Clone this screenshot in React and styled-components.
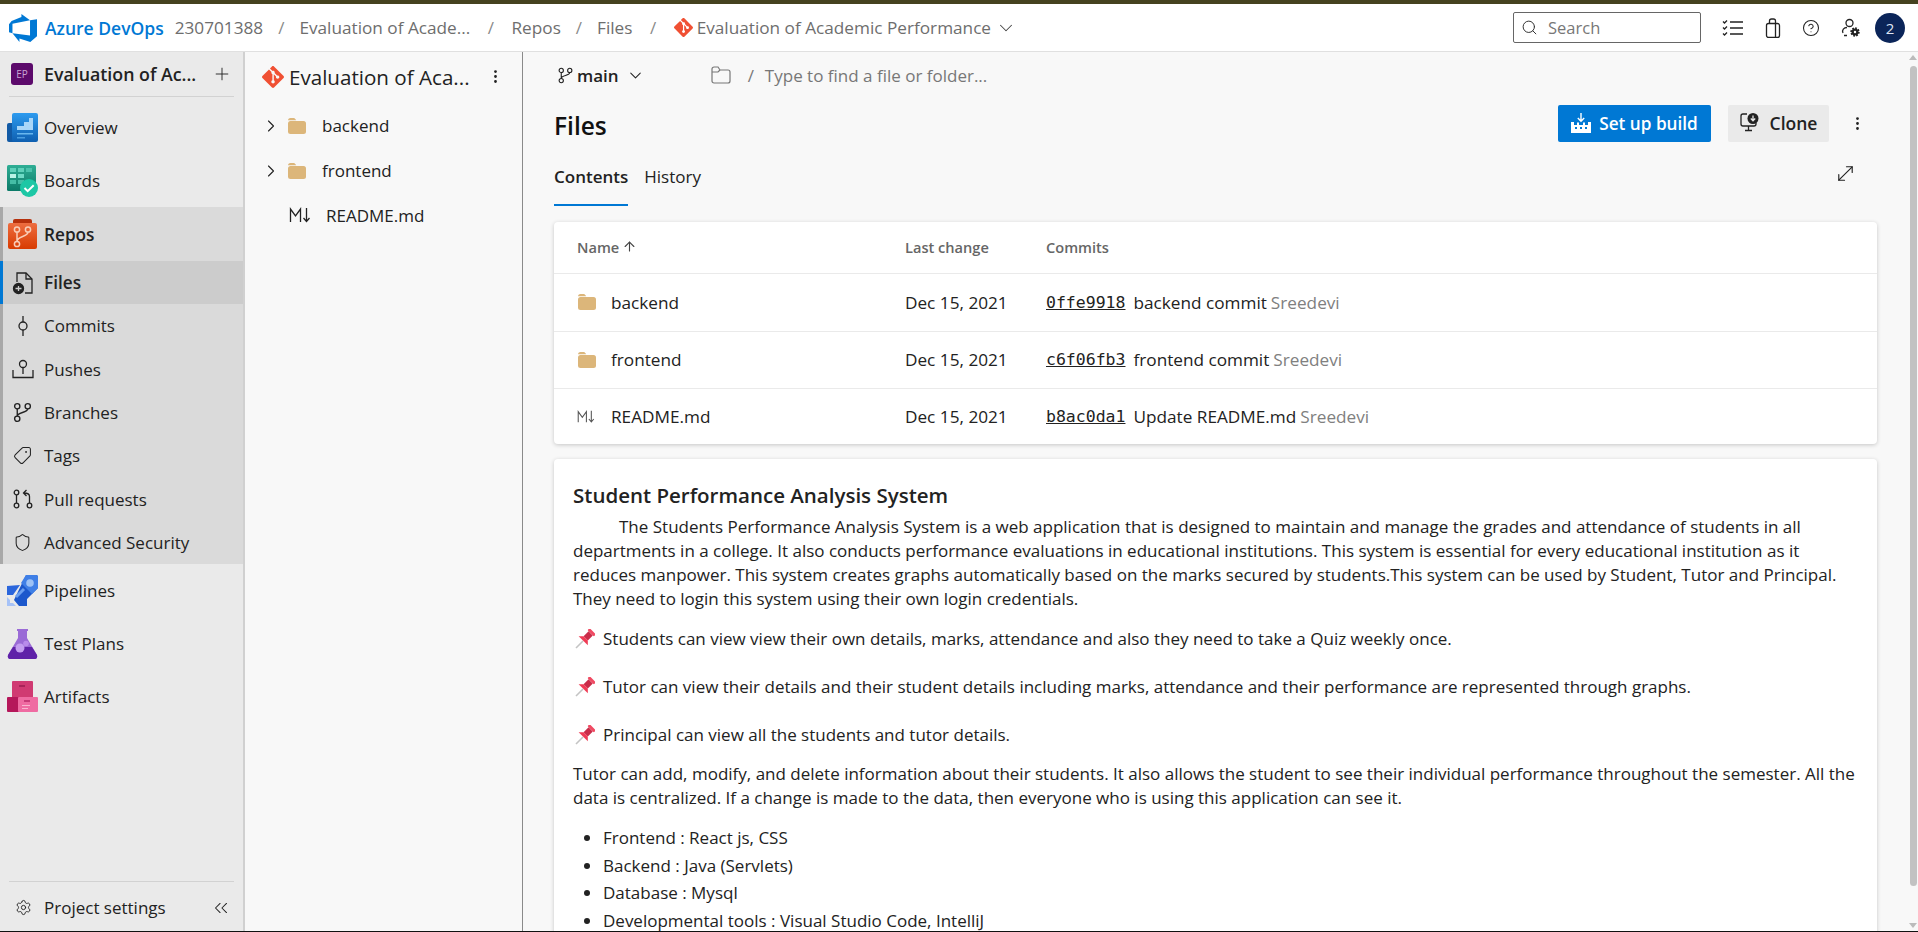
import React from "react";
import styled, { createGlobalStyle } from "styled-components";
import {
  ChevronRight,
  ChevronDown,
  ChevronsLeft,
  Plus,
  EllipsisVertical,
  Search,
  CircleHelp,
  Settings,
  MoveDiagonal,
  ArrowUp,
  Tag,
  Shield,
} from "lucide-react";

const GlobalStyle = createGlobalStyle`
  * { box-sizing: border-box; }
  html, body { margin: 0; padding: 0; height: 100%; overflow: hidden; }
  body {
    font-family: "Open Sans", "Noto Sans", sans-serif;
    font-size: 17px;
    color: #222;
    background: #fff;
  }
`;

//---------- icons --------

const GitLogo = ({ size = 22 }) => (
  <svg width={size} height={size} viewBox="0 0 24 24" fill="#f05033">
    <path d="M23.546 10.93L13.067.452c-.604-.603-1.582-.603-2.188 0L8.708 2.627l2.76 2.76c.645-.215 1.379-.07 1.889.441.516.515.658 1.258.438 1.9l2.658 2.66c.645-.223 1.387-.078 1.9.435.721.72.721 1.884 0 2.604-.719.719-1.881.719-2.6 0-.539-.541-.674-1.337-.404-1.996L12.86 8.955v6.525c.176.086.342.203.488.348.713.721.713 1.883 0 2.6-.719.721-1.889.721-2.609 0-.719-.719-.719-1.879 0-2.598.182-.18.387-.316.605-.406V8.835c-.217-.091-.424-.222-.6-.401-.545-.545-.676-1.342-.396-2.009L7.636 3.7.45 10.881c-.6.605-.6 1.584 0 2.189l10.48 10.477c.604.604 1.582.604 2.186 0l10.43-10.43c.605-.603.605-1.582 0-2.187" />
  </svg>
);

const AzureLogo = () => (
  <svg width="28" height="28" viewBox="0 0 24 24" fill="#0078d4">
    <path d="M0 8.877L2.247 5.91l8.405-3.416V.022l7.37 5.393L2.966 8.338v8.225L0 15.707zm24-4.45v14.651l-5.753 4.9-9.303-3.057v3.056l-5.978-7.416 15.057 1.798V5.415z" />
  </svg>
);

const FolderFilled = () => (
  <svg width="20" height="18" viewBox="0 0 20 18">
    <path d="M1 3.5A2.5 2.5 0 0 1 3.5 1h3c1 0 1.6.6 2.2 1.5l.5.8H1z" fill="#dcb67a" />
    <rect x="1" y="4" width="18" height="13" rx="2.5" fill="#dcb67a" />
  </svg>
);

const MarkdownIcon = ({ color = "#222", width = 22 }) => (
  <svg width={width} viewBox="0 0 22 17" fill="none" stroke={color} strokeWidth="1.3">
    <path d="M1.5 15V2l5 7 5-7v13" />
    <path d="M17.5 1v13M14.5 11l3 3.5 3-3.5" />
  </svg>
);

const BranchIcon = ({ size = 20 }) => (
  <svg width={size} height={size} viewBox="0 0 20 20" fill="none" stroke="#222" strokeWidth="1.3">
    <circle cx="5" cy="4" r="2.5" />
    <circle cx="15" cy="4" r="2.5" />
    <circle cx="5" cy="16" r="2.5" />
    <path d="M5 6.5v7M15 6.5c0 4-10 3-10 7" />
  </svg>
);

const CommitIcon = () => (
  <svg width="20" height="22" viewBox="0 0 20 22" fill="none" stroke="#222" strokeWidth="1.3">
    <circle cx="10" cy="11" r="4" />
    <path d="M10 1v6M10 15v6" />
  </svg>
);

const PushIcon = () => (
  <svg width="22" height="20" viewBox="0 0 22 20" fill="none" stroke="#222" strokeWidth="1.3">
    <circle cx="11" cy="5" r="3.5" />
    <path d="M11 8.5V15M1 11v7.5h20V11M1 18.5h20" />
  </svg>
);

const PullIcon = () => (
  <svg width="20" height="20" viewBox="0 0 20 20" fill="none" stroke="#222" strokeWidth="1.3">
    <circle cx="3.5" cy="3.5" r="2.3" />
    <circle cx="3.5" cy="16.5" r="2.3" />
    <circle cx="16.5" cy="16.5" r="2.3" />
    <path d="M3.5 6v8M16.5 14V7.5C16.5 5 14 4 11 4M13.5 1 10.5 4l3 3" />
  </svg>
);

const FilesIcon = () => (
  <svg width="22" height="24" viewBox="0 0 22 24" fill="none" stroke="#222" strokeWidth="1.3">
    <path d="M5 11V2h9l6 6v14h-7" />
    <path d="M14 2v6h6" />
    <circle cx="6.5" cy="17.5" r="5" fill="#222" />
    <path d="M3.5 17.5h6M6.5 15v5" stroke="#ccc" />
  </svg>
);

const FlippedTag = styled(Tag)`
  transform: scaleX(-1);
`;

const OverviewIcon = () => (
  <svg width="31" height="29" viewBox="0 0 31 29">
    <defs>
      <linearGradient id="ovg" x1="0" y1="0" x2="0" y2="1">
        <stop offset="0" stopColor="#2d9bef" />
        <stop offset="1" stopColor="#0f5fb0" />
      </linearGradient>
    </defs>
    <rect x="0" y="10" width="10" height="19" rx="2" fill="#125aa5" />
    <rect x="5" y="0" width="26" height="29" rx="2" fill="url(#ovg)" />
    <path d="M10 17v-4h7V9h5V5h4v12z" fill="#a9d6f8" />
    <rect x="10" y="20" width="16" height="1.5" fill="#69b7ee" />
    <rect x="10" y="24" width="8" height="1.5" fill="#4a9de0" />
  </svg>
);

const BoardsIcon = () => (
  <svg width="31" height="32" viewBox="0 0 31 32">
    <defs>
      <linearGradient id="bdg" x1="0" y1="0" x2="0" y2="1">
        <stop offset="0" stopColor="#2fae95" />
        <stop offset="1" stopColor="#0c7a68" />
      </linearGradient>
    </defs>
    <rect x="0" y="0" width="29" height="26" rx="1.5" fill="url(#bdg)" />
    <rect x="3" y="3" width="6" height="4" fill="#5fd0ba" />
    <rect x="11" y="3" width="6" height="4" fill="#5fd0ba" />
    <rect x="19" y="3" width="6" height="4" fill="#4cc2ac" />
    <rect x="3" y="9" width="6" height="4" fill="#b9f3e6" />
    <rect x="11" y="9" width="6" height="4" fill="#6fdac6" />
    <rect x="3" y="15" width="6" height="4" fill="#45bda6" />
    <rect x="11" y="15" width="6" height="4" fill="#45bda6" />
    <circle cx="22" cy="23" r="9" fill="#1dc7a5" />
    <path d="M17.5 23l3.2 3.2 6-6" fill="none" stroke="#fff" strokeWidth="2" />
  </svg>
);

const ReposIcon = () => (
  <svg width="29" height="30" viewBox="0 0 29 30">
    <defs>
      <linearGradient id="rpg" x1="0" y1="0" x2="0" y2="1">
        <stop offset="0" stopColor="#ed6d40" />
        <stop offset="1" stopColor="#d83b01" />
      </linearGradient>
    </defs>
    <rect x="5" y="0" width="19" height="7" rx="2" fill="#b5300c" />
    <rect x="0" y="4" width="29" height="26" rx="2" fill="url(#rpg)" />
    <g fill="none" stroke="#f9cdb8" strokeWidth="1.5">
      <circle cx="9" cy="10.5" r="2.6" />
      <circle cx="20" cy="10.5" r="2.6" />
      <circle cx="9" cy="25" r="2.6" />
      <path d="M9 13v9.5M20 13c0 5-11 4-11 9.5" />
    </g>
  </svg>
);

const PipelinesIcon = () => (
  <svg width="31" height="31" viewBox="0 0 31 31">
    <path d="M0 11l13-1-7 10H0z" fill="#2b66dc" />
    <path d="M19 0h10a2 2 0 0 1 2 2v11L20 24v7h-8l-5-6z" fill="#1c58cc" />
    <path d="M19 0h10a2 2 0 0 1 2 2v11l-6 6-11-11z" fill="#3f7fe6" />
    <circle cx="23" cy="8" r="3.8" fill="#9dc2f5" />
    <path d="M9 22l8-8" stroke="#6a9ff0" strokeWidth="3" />
    <path d="M0 22v9h9l-3-3H3v-3z" fill="#a6c2f7" />
  </svg>
);

const TestPlansIcon = () => (
  <svg width="31" height="31" viewBox="0 0 31 31">
    <path d="M10 1h11v2h-1v7l10 17c.7 2-.3 4-2 4H3c-1.7 0-2.7-2-2-4l10-17V3h-1z" fill="#9a6bd6" />
    <path d="M6 19h19l5 8c.7 2-.3 4-2 4H3c-1.7 0-2.7-2-2-4z" fill="#5f22a8" />
    <circle cx="13" cy="20" r="4.5" fill="#c39df0" />
    <circle cx="19" cy="15.5" r="2.8" fill="#b98ceb" />
  </svg>
);

const ArtifactsIcon = () => (
  <svg width="31" height="31" viewBox="0 0 31 31">
    <rect x="5" y="0" width="21" height="17" rx="1" fill="#d03a72" />
    <rect x="0" y="16" width="13" height="15" rx="1" fill="#b5175a" />
    <rect x="11" y="16" width="20" height="15" rx="1" fill="#ef6ba2" />
    <rect x="12" y="4" width="6" height="2" fill="#a82459" />
    <rect x="17" y="19" width="6" height="2" fill="#c73b78" />
    <rect x="15" y="24" width="8" height="1" fill="#f8b5d0" />
    <rect x="15" y="27" width="6" height="1" fill="#f8b5d0" />
  </svg>
);

const ChecklistIcon = () => (
  <svg width="22" height="18" viewBox="0 0 22 18" fill="none" stroke="#222" strokeWidth="1.3">
    <path d="M1 2.5L2.5 4 5 1.5M1 8.5L2.5 10 5 7.5M1 14.5L2.5 16 5 13.5" />
    <path d="M8 3h13M8 9h13M8 15h13" strokeWidth="1.5" />
  </svg>
);

const BagIcon = () => (
  <svg width="16" height="20" viewBox="0 0 16 20" fill="none" stroke="#222" strokeWidth="1.3">
    <rect x="1.5" y="5.5" width="13" height="14" rx="2" />
    <path d="M4.5 5.5V3a2 2 0 0 1 2-2h2a2 2 0 0 1 2 2v2.5M10.5 5.5v14" />
  </svg>
);

const UserGearIcon = () => (
  <svg width="20" height="20" viewBox="0 0 20 20" fill="none" stroke="#222" strokeWidth="1.3">
    <circle cx="8.5" cy="5" r="3.5" />
    <path d="M2 15c-1.5-3 1-5.5 4-5.5M3 17.5h3" />
    <circle cx="14" cy="14" r="3.5" fill="#222" strokeWidth="2.4" strokeDasharray="1.6 1.1" />
    <circle cx="14" cy="14" r="1.2" fill="#fff" stroke="none" />
  </svg>
);

const BuildIcon = () => (
  <svg width="20" height="20" viewBox="0 0 20 20" fill="#fff">
    <path d="M9.3 0h1.4v6.5l2-2 1 1L10 9.2 6.3 5.5l1-1 2 2z" />
    <path d="M0 9h3v3h3V9.5h2V12h4V9.5h2V12h3V9h3v11H0z" />
    <rect x="4" y="14" width="2" height="2" fill="#0078d4" />
    <rect x="9" y="14" width="2" height="2" fill="#0078d4" />
    <rect x="14" y="14" width="2" height="2" fill="#0078d4" />
  </svg>
);

const CloneIcon = () => (
  <svg width="20" height="20" viewBox="0 0 20 20" fill="none" stroke="#222" strokeWidth="1.3">
    <path d="M7 1H3a2 2 0 0 0-2 2v8a2 2 0 0 0 2 2h11a2 2 0 0 0 2-2v-1" />
    <path d="M8.5 13v4M5 17.5h7" />
    <circle cx="13" cy="5.5" r="5.5" fill="#222" stroke="none" />
    <path d="M13 2.5v5M10.8 5.5l2.2 2.3 2.2-2.3" stroke="#eaeaea" />
  </svg>
);

const EmptyFolder = () => (
  <svg width="20" height="18" viewBox="0 0 20 18" fill="none" stroke="#777" strokeWidth="1.2">
    <path d="M1 15V3a2 2 0 0 1 2-2h4l2 3h8a2 2 0 0 1 2 2v9a2 2 0 0 1-2 2H3a2 2 0 0 1-2-2zM1 6h6l2-2" />
  </svg>
);

const PinIcon = () => (
  <svg width="20" height="20" viewBox="0 0 20 20">
    <path d="M1 19l7-7" stroke="#c4c4c4" strokeWidth="1.6" />
    <g transform="rotate(45 10 10)">
      <rect x="5.5" y="-1" width="9" height="3" rx="1" fill="#f04a62" />
      <rect x="7" y="2" width="6" height="7" fill="#c92c49" />
      <path d="M7 9h6l3.5 3.5h-13z" fill="#ef3b55" />
    </g>
  </svg>
);

//---------- data --------

const topNav = [
  { label: "Overview", icon: <OverviewIcon /> },
  { label: "Boards", icon: <BoardsIcon /> },
];

const repoNav = [
  { label: "Commits", icon: <CommitIcon /> },
  { label: "Pushes", icon: <PushIcon /> },
  { label: "Branches", icon: <BranchIcon size={21} /> },
  { label: "Tags", icon: <FlippedTag size={19} strokeWidth={1.3} /> },
  { label: "Pull requests", icon: <PullIcon /> },
  { label: "Advanced Security", icon: <Shield size={19} strokeWidth={1.3} /> },
];

const bottomNav = [
  { label: "Pipelines", icon: <PipelinesIcon /> },
  { label: "Test Plans", icon: <TestPlansIcon /> },
  { label: "Artifacts", icon: <ArtifactsIcon /> },
];

const rows = [
  { name: "backend", hash: "0ffe9918", message: "backend commit", folder: true },
  { name: "frontend", hash: "c6f06fb3", message: "frontend commit", folder: true },
  { name: "README.md", hash: "b8ac0da1", message: "Update README.md", folder: false },
];

const pins = [
  "Students can view view their own details, marks, attendance and also they need to take a Quiz weekly once.",
  "Tutor can view their details and their student details including marks, attendance and their performance are represented through graphs.",
  "Principal can view all the students and tutor details.",
];

const tools = [
  "Frontend : React js, CSS",
  "Backend : Java (Servlets)",
  "Database : Mysql",
  "Developmental tools : Visual Studio Code, IntelliJ",
];

//---------- page --------

const App = () => (
  <>
    <GlobalStyle />
    <Page>
      <TopStrip />
      <Header>
        <Brand>
          <AzureLogo />
          <BrandName>Azure DevOps</BrandName>
        </Brand>
        <Crumb>230701388</Crumb>
        <Slash>/</Slash>
        <Crumb>Evaluation of Acade...</Crumb>
        <Slash $wide>/</Slash>
        <Crumb>Repos</Crumb>
        <Slash>/</Slash>
        <Crumb>Files</Crumb>
        <Slash $wide>/</Slash>
        <RepoCrumb>
          <GitLogo size={19} />
          <Crumb>Evaluation of Academic Performance</Crumb>
          <ChevronDown size={22} strokeWidth={1.1} color="#444" />
        </RepoCrumb>
        <HeaderRight>
          <SearchBox>
            <Search size={17} strokeWidth={1.4} color="#333" />
            <span>Search</span>
          </SearchBox>
          <HeaderIcons>
            <ChecklistIcon />
            <BagIcon />
            <CircleHelp size={18} strokeWidth={1.4} color="#222" />
            <UserGearIcon />
          </HeaderIcons>
          <Avatar>2</Avatar>
        </HeaderRight>
      </Header>
      <Body>
        <Sidebar>
          <ProjectRow>
            <ProjectBadge>EP</ProjectBadge>
            <ProjectName>Evaluation of Ac...</ProjectName>
            <Plus size={20} strokeWidth={1.1} color="#222" />
          </ProjectRow>
          <NavList>
            {topNav.map((item) => (
              <NavRow key={item.label}>
                <NavIcon>{item.icon}</NavIcon>
                {item.label}
              </NavRow>
            ))}
            <RepoGroup>
              <RepoHead>
                <NavIcon>
                  <ReposIcon />
                </NavIcon>
                Repos
              </RepoHead>
              <SubRow $active>
                <NavIcon>
                  <FilesIcon />
                </NavIcon>
                Files
              </SubRow>
              {repoNav.map((item) => (
                <SubRow key={item.label}>
                  <NavIcon>{item.icon}</NavIcon>
                  {item.label}
                </SubRow>
              ))}
            </RepoGroup>
            {bottomNav.map((item) => (
              <NavRow key={item.label}>
                <NavIcon>{item.icon}</NavIcon>
                {item.label}
              </NavRow>
            ))}
          </NavList>
          <SettingsRow>
            <Settings size={17} strokeWidth={1.3} />
            <SettingsLabel>Project settings</SettingsLabel>
            <ChevronsLeft size={22} strokeWidth={1.1} />
          </SettingsRow>
        </Sidebar>

        <TreePane>
          <TreeTitle>
            <GitLogo size={22} />
            <TreeName>Evaluation of Aca...</TreeName>
            <EllipsisVertical size={17} strokeWidth={2} />
          </TreeTitle>
          <TreeRow>
            <ChevronRight size={20} strokeWidth={1.3} />
            <FolderFilled />
            <TreeLabel>backend</TreeLabel>
          </TreeRow>
          <TreeRow>
            <ChevronRight size={20} strokeWidth={1.3} />
            <FolderFilled />
            <TreeLabel>frontend</TreeLabel>
          </TreeRow>
          <TreeRow $file>
            <MarkdownIcon />
            <TreeLabel $file>README.md</TreeLabel>
          </TreeRow>
        </TreePane>

        <Main>
          <Content>
            <BranchBar>
              <BranchIcon size={17} />
              <BranchName>main</BranchName>
              <ChevronDown size={19} strokeWidth={1.3} />
              <PathBox>
                <EmptyFolder />
                <PathSlash>/</PathSlash>
                <span>Type to find a file or folder...</span>
              </PathBox>
            </BranchBar>
            <TitleRow>
              <PageTitle>Files</PageTitle>
              <Actions>
                <PrimaryButton>
                  <BuildIcon />
                  Set up build
                </PrimaryButton>
                <CloneButton>
                  <CloneIcon />
                  Clone
                </CloneButton>
                <EllipsisVertical size={17} strokeWidth={2} />
              </Actions>
            </TitleRow>
            <TabsRow>
              <Tab $active>Contents</Tab>
              <Tab>History</Tab>
              <ExpandIcon>
                <MoveDiagonal size={23} strokeWidth={1.2} />
              </ExpandIcon>
            </TabsRow>

            <Card>
              <TableHead>
                <NameHead>
                  Name
                  <ArrowUp size={15} strokeWidth={1.8} color="#444" />
                </NameHead>
                <span>Last change</span>
                <span>Commits</span>
              </TableHead>
              {rows.map((row) => (
                <TableRow key={row.name}>
                  <NameCell>
                    <RowIcon>
                      {row.folder ? <FolderFilled /> : <MarkdownIcon color="#555" width={18} />}
                    </RowIcon>
                    {row.name}
                  </NameCell>
                  <span>Dec 15, 2021</span>
                  <CommitCell>
                    <Hash>{row.hash}</Hash>
                    <span>{row.message}</span>
                    <Author>Sreedevi</Author>
                  </CommitCell>
                </TableRow>
              ))}
            </Card>

            <ReadmeCard>
              <ReadmeTitle>Student Performance Analysis System</ReadmeTitle>
              <Intro>
                The Students Performance Analysis System is a web application that is designed to
                maintain and manage the grades and attendance of students in all departments in a
                college. It also conducts performance evaluations in educational institutions. This
                system is essential for every educational institution as it reduces manpower. This
                system creates graphs automatically based on the marks secured by students.This
                system can be used by Student, Tutor and Principal. They need to login this system
                using their own login credentials.
              </Intro>
              {pins.map((text) => (
                <PinLine key={text}>
                  <PinIcon />
                  {text}
                </PinLine>
              ))}
              <Closing>
                Tutor can add, modify, and delete information about their students. It also allows
                the student to see their individual performance throughout the semester. All the
                data is centralized. If a change is made to the data, then everyone who is using
                this application can see it.
              </Closing>
              <ToolList>
                {tools.map((tool) => (
                  <li key={tool}>{tool}</li>
                ))}
              </ToolList>
            </ReadmeCard>
          </Content>
          <ScrollTrack>
            <ScrollArrow />
            <ScrollThumb />
            <ScrollArrow $down />
          </ScrollTrack>
        </Main>
      </Body>
    </Page>
  </>
);

const Page = styled.div`
  width: 100%;
  height: 932px;
  display: flex;
  flex-direction: column;
  border-bottom: 1px solid #111;
  overflow: hidden;
`;

const TopStrip = styled.div`
  height: 4px;
  flex: none;
  background: #45421f;
`;

const Header = styled.header`
  height: 48px;
  flex: none;
  display: flex;
  align-items: center;
  padding-left: 9px;
  background: #fff;
  border-bottom: 1px solid #e0e0e0;
`;

const Brand = styled.div`
  display: flex;
  align-items: center;
  gap: 8px;
  margin-right: 11px;
`;

const BrandName = styled.span`
  color: #0078d4;
  font-weight: 600;
  font-size: 17.5px;
`;

const Crumb = styled.span`
  color: #6e6e6e;
  font-size: 17.2px;
  white-space: nowrap;
`;

const Slash = styled.span`
  color: #8a8a8a;
  margin: 0 ${(p) => (p.$wide ? "17.5px" : "15px")};
`;

const RepoCrumb = styled.div`
  display: flex;
  align-items: center;
  gap: 4px;
`;

const HeaderRight = styled.div`
  margin-left: auto;
  display: flex;
  align-items: center;
  padding-right: 13px;
`;

const SearchBox = styled.div`
  width: 188px;
  height: 31px;
  display: flex;
  align-items: center;
  gap: 10px;
  padding-left: 7px;
  border: 1px solid #666;
  border-radius: 2px;
  color: #777;
  font-size: 16.5px;
`;

const HeaderIcons = styled.div`
  display: flex;
  align-items: center;
  gap: 21px;
  margin: 0 14px 0 21px;
`;

const Avatar = styled.div`
  width: 30px;
  height: 30px;
  border-radius: 50%;
  background: #0b2559;
  color: #dfe6f5;
  display: flex;
  align-items: center;
  justify-content: center;
  font-size: 15px;
`;

const Body = styled.div`
  flex: 1;
  min-height: 0;
  display: flex;
`;

const Sidebar = styled.aside`
  width: 245px;
  flex: none;
  display: flex;
  flex-direction: column;
  background: #eaeaea;
  border-right: 2px solid #d0d0d0;
`;

const ProjectRow = styled.div`
  height: 45px;
  flex: none;
  margin: 0 9px;
  display: flex;
  align-items: center;
  border-bottom: 1px solid #d2d2d2;
  padding: 0 2px;
`;

const ProjectBadge = styled.div`
  width: 22px;
  height: 22px;
  border-radius: 3px;
  background: #5c0a6b;
  color: #c9a3d3;
  font-size: 10px;
  display: flex;
  align-items: center;
  justify-content: center;
`;

const ProjectName = styled.span`
  margin: 0 auto 0 11px;
  font-weight: 600;
  font-size: 17.8px;
  white-space: nowrap;
`;

const NavList = styled.nav`
  margin-top: 4px;
  display: flex;
  flex-direction: column;
`;

const NavIcon = styled.span`
  width: 31px;
  flex: none;
  display: flex;
  align-items: center;
  justify-content: center;
`;

const NavRow = styled.div`
  height: 53px;
  display: flex;
  align-items: center;
  gap: 6px;
  padding-left: 7px;
`;

const RepoGroup = styled.div`
  background: #dadada;
  border-left: 3px solid #a8a8a8;
`;

const RepoHead = styled.div`
  height: 54px;
  display: flex;
  align-items: center;
  gap: 6px;
  padding-left: 4px;
  font-size: 17.2px;
  font-weight: 600;
`;

const SubRow = styled.div`
  height: 43.3px;
  display: flex;
  align-items: center;
  gap: 6px;
  padding-left: 4px;
  font-size: ${(p) => (p.$active ? "17.2px" : "17px")};
  font-weight: ${(p) => (p.$active ? 600 : 400)};
  background: ${(p) => (p.$active ? "#cccccc" : "transparent")};
  box-shadow: ${(p) => (p.$active ? "-3px 0 0 #0078d4" : "none")};
`;

const SettingsRow = styled.div`
  margin: auto 9px 0;
  height: 50px;
  flex: none;
  display: flex;
  align-items: center;
  padding: 2px 2px 0 6px;
  border-top: 1px solid #d2d2d2;
`;

const SettingsLabel = styled.span`
  margin: 0 auto 0 12px;
`;

const TreePane = styled.section`
  width: 278px;
  flex: none;
  background: #f8f8f8;
  border-right: 1px solid #8a8a8a;
  padding: 0 17px;
`;

const TreeTitle = styled.div`
  height: 51px;
  padding-bottom: 2px;
  display: flex;
  align-items: center;
  gap: 5px;
`;

const TreeName = styled.span`
  font-size: 20.6px;
  width: 193px;
  white-space: nowrap;
`;

const TreeRow = styled.div`
  height: 45px;
  display: flex;
  align-items: center;
  gap: ${(p) => (p.$file ? "0" : "6px")};
  margin-left: -1px;
  padding-left: ${(p) => (p.$file ? "28px" : "0")};
`;

const TreeLabel = styled.span`
  margin-left: ${(p) => (p.$file ? "15px" : "9px")};
`;

const Main = styled.main`
  flex: 1;
  min-width: 0;
  display: flex;
  background: #f8f8f8;
`;

const Content = styled.div`
  flex: 1;
  min-width: 0;
  padding: 0 31px;
  overflow: hidden;
`;

const BranchBar = styled.div`
  height: 48px;
  display: flex;
  align-items: center;
  padding: 0 0 2px 3px;
`;

const BranchName = styled.span`
  font-weight: 600;
  margin: 0 7px 0 3px;
`;

const PathBox = styled.div`
  display: flex;
  align-items: center;
  margin-left: 66px;
  color: #777;
`;

const PathSlash = styled.span`
  margin: 0 11px 0 17px;
`;

const TitleRow = styled.div`
  height: 46px;
  display: flex;
  align-items: center;
  justify-content: space-between;
`;

const PageTitle = styled.h1`
  margin: 5px 0 0;
  font-size: 24.5px;
  font-weight: 600;
  color: #111;
`;

const Actions = styled.div`
  display: flex;
  align-items: center;
  margin-right: -1px;
  padding-right: 12px;
`;

const PrimaryButton = styled.div`
  width: 153px;
  height: 37px;
  display: flex;
  align-items: center;
  justify-content: center;
  gap: 8px;
  background: #0078d4;
  border-radius: 2px;
  color: #fff;
  font-weight: 600;
  font-size: 17.2px;
`;

const CloneButton = styled.div`
  width: 101px;
  height: 37px;
  margin: 0 20px 0 17px;
  display: flex;
  align-items: center;
  justify-content: center;
  gap: 10px;
  background: #eaeaea;
  border-radius: 2px;
  font-weight: 600;
  font-size: 17.5px;
`;

const TabsRow = styled.div`
  height: 60px;
  display: flex;
  align-items: flex-start;
  gap: 16px;
`;

const Tab = styled.div`
  height: 60px;
  padding-top: 19px;
  font-weight: ${(p) => (p.$active ? 600 : 400)};
  border-bottom: ${(p) => (p.$active ? "2px solid #0078d4" : "none")};
`;

const ExpandIcon = styled.div`
  margin: 16px 20px 0 auto;
`;

const Card = styled.div`
  margin-top: 16px;
  background: #fff;
  border-radius: 4px;
  box-shadow: 0 1px 4px rgba(0, 0, 0, 0.2);
`;

const TableHead = styled.div`
  height: 52px;
  padding: 0 0 2px 23px;
  display: grid;
  grid-template-columns: 328px 141px 1fr;
  align-items: center;
  border-bottom: 1px solid #eaeaea;
  color: #666;
  font-size: 14.6px;
  font-weight: 600;
`;

const NameHead = styled.span`
  display: flex;
  align-items: center;
  gap: 3px;
`;

const TableRow = styled.div`
  height: 57.5px;
  display: grid;
  grid-template-columns: 328px 141px 1fr;
  align-items: center;
  padding-left: 23px;
  border-bottom: 1px solid #eaeaea;
  font-size: 17.2px;
  &:last-child {
    height: 55px;
    border-bottom: none;
  }
`;

const NameCell = styled.span`
  display: flex;
  align-items: center;
`;

const RowIcon = styled.span`
  width: 34px;
  display: flex;
`;

const CommitCell = styled.span`
  display: flex;
  align-items: center;
  gap: 8px;
`;

const Hash = styled.span`
  font-family: "DejaVu Sans Mono", "Liberation Mono", monospace;
  font-size: 16.5px;
  text-decoration: underline;
`;

const Author = styled.span`
  color: #808080;
  margin-left: -4px;
`;

const ReadmeCard = styled.article`
  margin-top: 15px;
  height: 600px;
  padding: 22px 19px 0;
  background: #fff;
  border-radius: 4px;
  box-shadow: 0 1px 4px rgba(0, 0, 0, 0.2);
  line-height: 24px;
`;

const ReadmeTitle = styled.h2`
  margin: 0 0 6px;
  font-size: 20.5px;
  line-height: 28px;
  font-weight: 600;
`;

const Intro = styled.p`
  margin: 0 0 16px;
  text-indent: 46px;
`;

const PinLine = styled.p`
  margin: 0 0 24px;
  display: flex;
  align-items: center;
  gap: 8px;
  padding-left: 2px;
`;

const Closing = styled.p`
  margin: -9px 0 14px;
`;

const ToolList = styled.ul`
  margin: 0;
  padding-left: 30px;
  line-height: 27.5px;
`;

const ScrollTrack = styled.div`
  width: 10px;
  flex: none;
  display: flex;
  flex-direction: column;
  align-items: center;
  padding-top: 3px;
`;

const ScrollArrow = styled.div`
  width: 0;
  height: 0;
  border-left: 4px solid transparent;
  border-right: 4px solid transparent;
  ${(p) =>
    p.$down
      ? "border-top: 5px solid #bbb; margin-top: 37px;"
      : "border-bottom: 5px solid #bbb; margin-bottom: 6px;"}
`;

const ScrollThumb = styled.div`
  width: 7px;
  height: 820px;
  border-radius: 4px;
  background: #c2c2c2;
`;

export default App;
